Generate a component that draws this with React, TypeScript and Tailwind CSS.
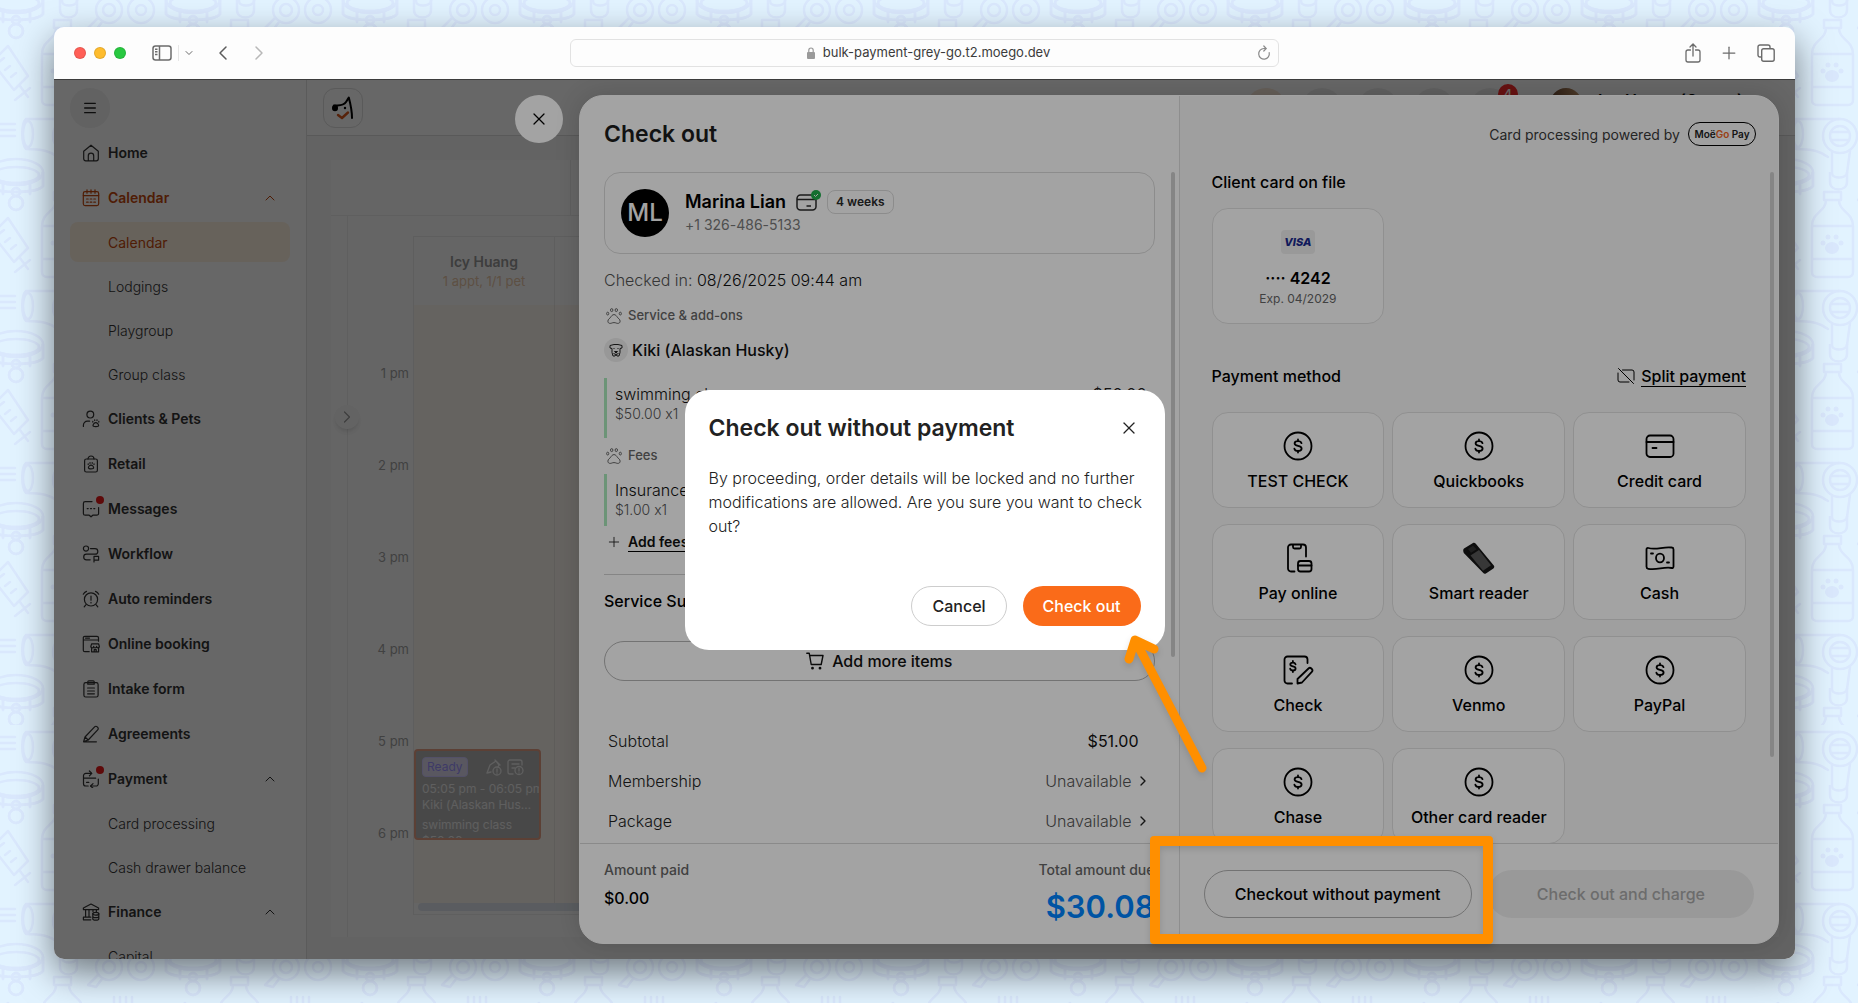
import type { ReactNode } from 'react'
import { ChevronDown, ChevronLeft, ChevronRight, ChevronUp, Menu, Plus, X } from 'lucide-react'

type IconName =
  | 'home'
  | 'calendar'
  | 'clients'
  | 'retail'
  | 'messages'
  | 'workflow'
  | 'reminders'
  | 'booking'
  | 'intake'
  | 'agreements'
  | 'payment'
  | 'finance'

const navIcons: Record<IconName, ReactNode> = {
  home: <path d="M1.7 7.2 9 1.2l7.3 6v7.6a2 2 0 0 1-2 2H3.7a2 2 0 0 1-2-2zM6.3 16.8v-5a2.7 2.7 0 0 1 5.4 0v5" />,
  calendar: (
    <>
      <rect x="1.3" y="2.6" width="15.4" height="14" rx="1.8" />
      <path d="M1.3 6.6h15.4M5 .8v3.4M9 .8v3.4M13 .8v3.4" />
      <path d="M4.6 10h1.6M8.2 10h1.6M11.8 10h1.6M4.6 13.2h1.6M8.2 13.2h1.6M11.8 13.2h1.6" />
    </>
  ),
  clients: (
    <>
      <circle cx="8.3" cy="4.6" r="3.4" />
      <path d="M1.4 16.4v-1.2a4 4 0 0 1 4-4h2.2M13.8 12.6c1.4 0 2.8 1.6 2.8 2.9 0 1.5-5.6 1.5-5.6 0 0-1.3 1.4-2.9 2.8-2.9zM12.7 9.8v.7M15 9.8v.7M10.8 11.4v.7M16.8 11.4v.7" />
    </>
  ),
  retail: (
    <>
      <rect x="2.6" y="4" width="12.8" height="13" rx="1.8" />
      <path d="M6 4a3 3 0 0 1 6 0M9 10.2c1.4 0 2.6 1.5 2.6 2.6 0 1.5-5.2 1.5-5.2 0 0-1.1 1.2-2.6 2.6-2.6zM8 7.6v.7M10.2 7.6v.7M6.2 8.8v.7M12 8.8v.7" />
    </>
  ),
  messages: (
    <path d="M10 1.6H3.2a1.8 1.8 0 0 0-1.8 1.8v10a1.8 1.8 0 0 0 1.8 1.8h4L9 16.8l1.8-1.6h4a1.8 1.8 0 0 0 1.8-1.8V7.5M5.2 8.6h1M8.5 8.6h1M11.8 8.6h1" />
  ),
  workflow: (
    <>
      <circle cx="4" cy="3.6" r="2.6" />
      <path d="M8.5 3.6H13a2.6 2.6 0 0 1 0 5.6H4.5a2.8 2.8 0 0 0 0 5.6h3.7M12 17v-5.6h4.6v3.8H12" />
    </>
  ),
  reminders: (
    <>
      <circle cx="9" cy="9.4" r="6.6" />
      <path d="M1.3 4.2a6 6 0 0 1 3.2-2.8M16.7 4.2a6 6 0 0 0-3.2-2.8M3.8 14.8l-1.6 2M14.2 14.8l1.6 2M9 6v4.2M9 12.4v.5" />
    </>
  ),
  booking: (
    <>
      <path d="M16.5 6.2V2.8A1.5 1.5 0 0 0 15 1.3H2.8a1.5 1.5 0 0 0-1.5 1.5v12.4a1.5 1.5 0 0 0 1.5 1.5h4.4M1.3 5h15.2M3.5 3.1h4" />
      <path d="M9.6 12.3v4.5h7v-4.5M8.8 11.4l.9-2.6h6.800l.9 2.600a1.400 1.400 0 0 1-2.800 0 1.400 1.400 0 0 1-2.900 0 1.400 1.400 0 0 1-2.900 0zM12.200 16.800v-2.200h2v2.200" />
    </>
  ),
  intake: (
    <>
      <rect x="1.9" y="2.6" width="14.2" height="14.4" rx="1.8" />
      <path d="M5.8 4.2V1.8a1 1 0 0 1 1-1h4.4a1 1 0 0 1 1 1v2.4zM5.6 8h6.8M5.6 11h6.8M5.6 13.8h6.8" />
    </>
  ),
  agreements: (
    <path d="M3 12 12.6 1.8a1.8 1.8 0 0 1 2.6 0l.5.5a1.8 1.8 0 0 1 0 2.6L6.2 15l-4.6 1.6zM3 12l3.2 3M1.6 16.8h12.8" />
  ),
  payment: (
    <>
      <path d="M9.5 3.4H3.8a2.3 2.3 0 0 0-2.3 2.3v8a2.3 2.3 0 0 0 2.3 2.3h2.4M8.6 16H14a2.3 2.3 0 0 0 2.3-2.3V9M1.5 8.2h12.2M4.6 12.4h2.2" />
      <path d="m7.4 1 2.4 2.4-2.4 2.4M11 13.6 8.6 16l2.4 2.2" />
    </>
  ),
  finance: (
    <>
      <path d="M1.4 6.6V5L9 1l7.6 4v1.6zM3.6 6.6v7M7 6.6v7M11 6.6v2M14.4 6.6v2M1.4 16.6v-2.4h7.4M1.4 16.8h7.4" />
      <ellipse cx="13.8" cy="10.7" rx="3" ry="1.4" />
      <path d="M10.8 10.7v5c0 2 6 2 6 0v-5M10.8 13.2c0 2 6 2 6 0" />
    </>
  ),
}

type NavItem = { label: string; icon?: IconName; open?: boolean; dot?: boolean; active?: boolean }

const navItems: NavItem[] = [
  { label: 'Home', icon: 'home' },
  { label: 'Calendar', icon: 'calendar', open: true, active: true },
  { label: 'Calendar', active: true },
  { label: 'Lodgings' },
  { label: 'Playgroup' },
  { label: 'Group class' },
  { label: 'Clients & Pets', icon: 'clients' },
  { label: 'Retail', icon: 'retail' },
  { label: 'Messages', icon: 'messages', dot: true },
  { label: 'Workflow', icon: 'workflow' },
  { label: 'Auto reminders', icon: 'reminders' },
  { label: 'Online booking', icon: 'booking' },
  { label: 'Intake form', icon: 'intake' },
  { label: 'Agreements', icon: 'agreements' },
  { label: 'Payment', icon: 'payment', open: true, dot: true },
  { label: 'Card processing' },
  { label: 'Cash drawer balance' },
  { label: 'Finance', icon: 'finance', open: true },
  { label: 'Capital' },
]

const hours = ['1 pm', '2 pm', '3 pm', '4 pm', '5 pm', '6 pm']

function Backdrop() {
  return (
    <svg className="absolute inset-0 h-full w-full" aria-hidden="true">
      <defs>
        <g id="collar">
          <ellipse cx="16" cy="0" rx="27" ry="13" />
          <ellipse cx="16" cy="3" rx="23" ry="8" />
          <path d="M-11 0v14c6 8 48 8 54 0V0M3 10v12M30 10v12" />
          <circle cx="16" cy="20" r="4" />
          <circle cx="16" cy="31" r="7" />
        </g>
        <g id="doodles" fill="none" stroke="#dae8fd" strokeWidth="2.5" strokeLinecap="round" strokeLinejoin="round">
          <use href="#collar" />
          <use href="#collar" x="177" />
          <use href="#collar" y="172" />
          <use href="#collar" x="177" y="172" />
          <path d="M-8 62 8 46l20 30-14 14zM4 58l-5 4M10 66l-5 4M16 73l-5 4M20 86l8 11M15 100l15-12M0 124h15M0 130h15M0 136h15" />
          <path d="M60 0v10c0 10 17 10 17 0V0" />
          <path d="M54 20h17v8H54zM56 28c0 12-14 12-14 26v46c0 3 2 5 5 5h31c3 0 5-2 5-5V54c0-14-14-14-14-26M42 54h41M42 87h41" />
          <path d="M70 119H26c-5 5-5 24 0 30 16 0 24 2 32 8M62 152v21c0 6 14 6 15 0l3-22" />
          <ellipse cx="28" cy="134" rx="5" ry="13" />
          <circle cx="70" cy="136" r="17" />
          <circle cx="70" cy="136" r="10" />
          <path d="M61 132h18M61 140h18" />
          <circle cx="109" cy="10" r="13" />
          <circle cx="109" cy="10" r="6" />
          <path d="M98 18 88 28l8 2 6-8" />
          <circle cx="141" cy="10" r="13" />
          <circle cx="141" cy="10" r="5" />
          <path d="M114 60V40M120 60V40M126 60V40M132 60V40M110 60h26v10h-26z" />
        </g>
        <g id="paw" fill="#dae8fd">
          <ellipse cx="62" cy="76" rx="7" ry="6" />
          <circle cx="53" cy="71" r="2.5" />
          <circle cx="58" cy="65" r="2.5" />
          <circle cx="66" cy="65" r="2.5" />
          <circle cx="71" cy="71" r="2.5" />
        </g>
        <pattern id="upper" width="177" height="172" patternUnits="userSpaceOnUse">
          <use href="#doodles" />
          <use href="#doodles" y="-172" />
          <use href="#paw" />
        </pattern>
        <pattern id="lower" width="177" height="172" patternUnits="userSpaceOnUse" patternTransform="translate(0 97)">
          <use href="#doodles" />
          <use href="#doodles" y="-172" />
          <use href="#paw" />
        </pattern>
      </defs>
      <rect width="100%" height="725" fill="url(#upper)" />
      <rect y="725" width="100%" height="100%" fill="url(#lower)" />
    </svg>
  )
}

function TitleBar() {
  return (
    <div className="flex h-[53px] shrink-0 items-center border-b border-[#3c3c3c] bg-[#fdfdfd] px-5">
      <div className="flex flex-1 items-center">
        <div className="flex gap-2">
          <span className="size-3 rounded-full border border-black/10 bg-[#ff5f57]" />
          <span className="size-3 rounded-full border border-black/10 bg-[#febc2e]" />
          <span className="size-3 rounded-full border border-black/10 bg-[#28c840]" />
        </div>
        <svg className="ml-[26px] h-4 w-5" viewBox="0 0 20 16" fill="none" stroke="#6b6b6b" strokeWidth="1.5">
          <rect x="1" y="1" width="18" height="14" rx="2.5" />
          <path d="M7.5 1v14M3 4.2h2.5M3 6.800h2.500M3 9.400h2.500" />
        </svg>
        <span className="ml-1.5 h-4 w-px bg-[#e6e6e6]" />
        <ChevronDown className="ml-1 size-3 text-[#6b6b6b]" />
        <button type="button" aria-label="Back" className="ml-4 text-[#5c5c5c]">
          <ChevronLeft className="size-6" strokeWidth={1.5} />
        </button>
        <button type="button" aria-label="Forward" className="ml-3 text-[#b8b8b8]">
          <ChevronRight className="size-6" strokeWidth={1.5} />
        </button>
      </div>
      <div className="flex h-7 w-5/12 items-center justify-center rounded-md border border-[#e2e2e2] px-1.5 text-[13px] text-[#3b3b3b]">
        <span className="flex flex-1 items-center justify-center gap-2 pl-6">
          <svg className="h-3 w-2" viewBox="0 0 8 12" fill="#9a9a9a">
            <rect y="5" width="8" height="7" rx="1" />
            <path d="M1.8 5V3.2a2.2 2.2 0 0 1 4.4 0V5" fill="none" stroke="#9a9a9a" strokeWidth="1.2" />
          </svg>
          bulk-payment-grey-go.t2.moego.dev
        </span>
        <svg className="size-4" viewBox="0 0 16 16" fill="none" stroke="#8a8a8a" strokeWidth="1.2" strokeLinecap="round">
          <path d="M8 3.500a5.300 5.300 0 1 0 5.200 4.200M8 3.500h2M7.800 1l2.400 2.500L7.800 6" />
        </svg>
      </div>
      <div className="flex flex-1 items-center justify-end gap-[18px] text-[#6b6b6b]">
        <svg className="h-5 w-4" viewBox="0 0 16 20" fill="none" stroke="currentColor" strokeWidth="1.3" strokeLinecap="round">
          <path d="M5.500 7H3a2 2 0 0 0-2 2v8a2 2 0 0 0 2 2h10a2 2 0 0 0 2-2V9a2 2 0 0 0-2-2h-2.500M8 13V1M5 4l3-3 3 3" />
        </svg>
        <Plus className="size-5" strokeWidth={1.5} />
        <svg className="size-[18px]" viewBox="0 0 18 18" fill="none" stroke="currentColor" strokeWidth="1.4">
          <rect x="4.7" y="4.7" width="12.5" height="12.5" rx="2" />
          <path d="M4.700 13H3a2 2 0 0 1-2-2V3a2 2 0 0 1 2-2h8a2 2 0 0 1 2 2v1.700" />
        </svg>
      </div>
    </div>
  )
}

function Sidebar() {
  return (
    <nav className="w-[253px] shrink-0 border-r border-[#e2e2e2] px-4 pt-2 text-[14px] text-[#333]">
      <button type="button" aria-label="Collapse menu" className="flex size-10 items-center justify-center rounded-full bg-[#f3f3f3]">
        <Menu className="size-4 text-[#222]" />
      </button>
      <ul className="pt-0.5">
        {navItems.map((item, i) =>
          item.icon ? (
            <li key={i} className="flex h-[45px] items-center">
              <a href="#" className={item.active ? 'flex flex-1 items-center pl-3 font-semibold text-[#c5490d]' : 'flex flex-1 items-center pl-3 font-semibold'}>
                <span className="relative">
                  <svg className="size-[18px]" viewBox="0 0 18 18" fill="none" stroke="currentColor" strokeWidth="1.2" strokeLinecap="round" strokeLinejoin="round">
                    {navIcons[item.icon]}
                  </svg>
                  {item.dot && <span className="absolute -top-1 -right-1 size-2 rounded-full bg-[#ea1c1c]" />}
                </span>
                <span className="flex-1 pl-2">{item.label}</span>
                {item.open && <ChevronUp className="mr-3 size-4" strokeWidth={1.5} />}
              </a>
            </li>
          ) : (
            <li key={i} className="h-11 py-0.5">
              <a
                href="#"
                className={
                  item.active
                    ? 'flex h-10 items-center rounded-lg bg-[#fff3e2] pl-[38px] text-[#c5490d]'
                    : 'flex h-10 items-center pl-[38px] font-light'
                }
              >
                {item.label}
              </a>
            </li>
          )
        )}
      </ul>
    </nav>
  )
}

function Appointment() {
  return (
    <div className="h-[91px] w-[127px] overflow-hidden rounded-sm border-2 border-[#e69f86] bg-[#b4b4b4] px-1.5 pt-1.5 text-[12px] whitespace-nowrap text-[#ececec]">
      <div className="flex items-center justify-between pr-2">
        <span className="rounded-sm border border-[#cfc8ff] bg-[#dcdaf0] px-1 text-xs leading-[18px] text-[#9c92ff]">Ready</span>
        <svg className="h-[18px] w-10" viewBox="0 0 40 18" fill="none" stroke="currentColor" strokeWidth="1.3" strokeLinecap="round" strokeLinejoin="round">
          <path d="M2 15 5 7l6-4 3 4-1 2M2 15l4-1M10 2l5 5" />
          <circle cx="12" cy="13" r="4" />
          <path d="M12 11v2.500M12 15v.2M28 16h-3a2 2 0 0 1-2-2V4a2 2 0 0 1 2-2h10a2 2 0 0 1 2 2v3M27 6h7M27 10h3" />
          <circle cx="34" cy="12.5" r="4" />
          <path d="M34 10.500V13M34 14.800v.2" />
        </svg>
      </div>
      <p className="pt-1 leading-4">05:05 pm - 06:05 pm</p>
      <p className="w-28 truncate leading-4">Kiki (Alaskan Husky)</p>
      <p className="pt-1 leading-4">swimming class</p>
      <p className="leading-4">$50.00</p>
    </div>
  )
}

function CalendarPage() {
  return (
    <div className="flex min-w-0 flex-1 flex-col bg-[#f6f6f6]">
      <header className="flex h-14 shrink-0 items-start border-b border-[#dcdcdc] bg-white px-4 pt-2">
        <div className="flex size-10 items-center justify-center rounded-xl border border-[#e0e0e0]">
          <svg className="size-6" viewBox="0 0 24 24" fill="none" strokeLinecap="round" strokeLinejoin="round">
            <path d="M3 9.500c5-.5 9 1 12-3.500 1.200-1.800 2-3.200 2.800-4.500C19.500 8 21 14 21 22" stroke="#000" strokeWidth="2" />
            <ellipse cx="4" cy="12" rx="3" ry="3.300" fill="#000" />
            <circle cx="14" cy="12" r="1.2" fill="#000" />
            <path d="m7 19 4 3 6-5.500" stroke="#d8561a" strokeWidth="2.4" />
          </svg>
        </div>
        <div className="flex flex-1 items-start justify-end gap-4 pr-9">
          <span className="size-10 rounded-full bg-[#fbeadb]" />
          <span className="size-10 rounded-full bg-[#efefef]" />
          <span className="size-10 rounded-full bg-[#efefef]" />
          <span className="size-10 rounded-full bg-[#efefef]" />
          <span className="relative size-10 rounded-full bg-[#efefef]">
            <span className="absolute -top-1 -right-2 size-5 rounded-full bg-[#ff2c2c] text-center text-xs leading-5 font-semibold text-white">4</span>
          </span>
          <span className="ml-6 size-8 rounded-full bg-[#9c6b45] bg-linear-to-r from-[#6d4a33] to-[#c99a6c]" />
          <span className="text-base leading-6 font-semibold text-black">Icy Huang (Owner)</span>
        </div>
      </header>
      <div className="flex min-h-0 flex-1 flex-col pt-6 pr-4 pb-[22px] pl-6">
        <div className="flex min-h-0 flex-1 flex-col bg-[#fcfcfc]">
          <div className="h-14 shrink-0 border-b border-[#ececec]">
            <div className="h-full w-[240px] border-r border-[#ececec]" />
          </div>
          <div className="flex min-h-0 flex-1">
            <div className="relative w-[17px] shrink-0 border-r border-[#ececec]">
              <button type="button" aria-label="Expand" className="absolute top-[189px] -right-3 flex size-6 items-center justify-center rounded-full bg-[#f7f7f7] text-[#9a9a9a] shadow-md">
                <ChevronRight className="size-5" strokeWidth={1.5} />
              </button>
            </div>
            <div className="w-[65px] shrink-0 pt-[141px] pr-1 text-right text-[13px] text-[#a2a2a2]">
              {hours.map((h) => (
                <div key={h} className="h-[92px] leading-8">
                  {h}
                </div>
              ))}
            </div>
            <div className="mt-5 mb-[22px] flex flex-1 flex-col border-t border-l border-[#ebebeb]">
              <div className="flex h-[68px] w-[141px] flex-col items-center justify-center border-r border-[#ebebeb]">
                <span className="text-[14px] leading-5 font-semibold text-[#989898]">Icy Huang</span>
                <span className="text-[13px] leading-[18px] text-[#e8c6a6]">1 appt, 1/1 pet</span>
              </div>
              <div className="min-h-0 flex-1 bg-[#fcf6ef]">
                <div className="h-full w-[141px] border-r border-[#ebe6e0] pt-[444px]">
                  <Appointment />
                </div>
              </div>
              <div className="h-3 border-b border-[#ececec]">
                <div className="ml-1 h-2 rounded-l-full bg-[#e0e6ee]" />
              </div>
            </div>
          </div>
        </div>
      </div>
    </div>
  )
}

function PawIcon() {
  return (
    <svg className="size-4" viewBox="0 0 16 16" fill="none" stroke="currentColor" strokeWidth="1" strokeLinejoin="round">
      <path d="M8 6.600c1.600 0 2.500 1.300 3.300 2.600.7 1.200 2.800 1.800 2.800 4 0 1.500-1 2.200-2.300 2.200-1.400 0-2-.8-3.800-.8s-2.400.8-3.800.8c-1.300 0-2.300-.7-2.300-2.200 0-2.200 2.100-2.800 2.800-4C5.500 7.900 6.400 6.600 8 6.600z" />
      <ellipse cx="5.7" cy="2.1" rx="1.2" ry="1.5" />
      <ellipse cx="10.3" cy="2.1" rx="1.2" ry="1.5" />
      <ellipse cx="1.7" cy="5.6" rx="1.1" ry="1.4" />
      <ellipse cx="14.3" cy="5.6" rx="1.1" ry="1.4" />
    </svg>
  )
}

function LineItem({ name, detail, price }: { name: string; detail: string; price: string }) {
  return (
    <div className="flex flex-1 items-start justify-between border-l-[3px] border-[#a9e8bb] pt-1.5 pr-2 pl-2">
      <div>
        <p className="text-base leading-5 font-light text-[#111]">{name}</p>
        <p className="text-[14px] leading-5 font-light text-[#555]">{detail}</p>
      </div>
      <span className="text-base leading-5 text-[#222]">{price}</span>
    </div>
  )
}

function SummaryRow({ label, value, link }: { label: string; value: string; link?: boolean }) {
  return (
    <div className="flex h-10 items-center px-1 text-base font-light">
      <span className="flex-1 text-[#222]">{label}</span>
      {link ? (
        <button type="button" className="flex items-center gap-[3px] text-[#555]">
          {value}
          <ChevronRight className="size-4 text-[#222]" strokeWidth={2} />
        </button>
      ) : (
        <span className="pr-3 font-normal text-[#111]">{value}</span>
      )}
    </div>
  )
}

function OrderPane() {
  return (
    <section className="flex min-w-0 flex-1 flex-col border-r border-[#dedede]">
      <h1 className="px-6 py-[22px] text-[23px] leading-8 font-semibold text-[#1d1d1d]">Check out</h1>
      <div className="flex min-h-0 flex-1 overflow-hidden pr-1 pl-6">
        <div className="flex-1">
          <div className="flex h-[82px] items-center gap-4 rounded-2xl border border-[#dcdcdc] px-4">
            <span className="flex size-12 items-center justify-center rounded-full bg-black text-[24px] font-medium text-white">ML</span>
            <div>
              <div className="flex items-center gap-2.5">
                <span className="text-[18px] leading-6 font-semibold text-black">Marina Lian</span>
                <span className="relative">
                  <svg className="h-[17px] w-[21px]" viewBox="0 0 21 17" fill="none" stroke="#2a2a2a" strokeWidth="1.5">
                    <rect x="1" y="1" width="19" height="15" rx="3.5" />
                    <path d="M1 5.500h19M10.500 12h4.500" />
                  </svg>
                  <svg className="absolute -top-1 -right-1 size-2.5" viewBox="0 0 10 10">
                    <circle cx="5" cy="5" r="5" fill="#1fae4b" />
                    <path d="m3 5 1.500 1.500L7 4" fill="none" stroke="#fff" />
                  </svg>
                </span>
                <span className="rounded-lg border border-[#dcdcdc] px-2 text-[12px] leading-[22px] font-semibold text-[#2a2a2a]">4 weeks</span>
              </div>
              <p className="text-[14px] leading-[22px] text-[#7b7b7b]">+1 326-486-5133</p>
            </div>
          </div>
          <p className="pt-3.5 text-base leading-6 font-light text-[#111]">
            <span className="text-[#555]">Checked in:</span> 08/26/2025 09:44 am
          </p>
          <div className="mt-3.5 flex h-5 items-center gap-1.5 pl-0.5 text-[13px] font-medium text-[#666]">
            <PawIcon />
            Service &amp; add-ons
          </div>
          <div className="mt-3 flex items-center gap-1">
            <span className="flex size-6 items-center justify-center rounded-full bg-[#eee]">
              <svg className="size-3.5" viewBox="0 0 14 14" fill="none" stroke="#222" strokeWidth="1" strokeLinejoin="round">
                <path d="M3 2 1 2.500v2.500l2 .5v4L4 13h2l1-1.500L8 13h2l1-3.500v-4l2-.5V2.500L11 2 9 1.500H5zM5.500 8.500h3L7 10zM5 5v1M9 5v1M4.500 10.500 7 11.500l2.500-1" />
              </svg>
            </span>
            <span className="text-base leading-6 font-medium text-[#111]">Kiki (Alaskan Husky)</span>
          </div>
          <div className="mt-4 flex h-[60px]">
            <LineItem name="swimming class" detail="$50.00 x1" price="$50.00" />
          </div>
          <div className="mt-2 flex h-5 items-center gap-1.5 pl-0.5 text-[13px] font-medium text-[#666]">
            <PawIcon />
            Fees
          </div>
          <div className="mt-2 flex h-[52px]">
            <LineItem name="Insurance" detail="$1.00 x1" price="$1.00" />
          </div>
          <button type="button" className="mt-1 flex h-6 items-center gap-1.5 pl-0.5 text-[14px] font-semibold text-[#111]">
            <Plus className="size-4" strokeWidth={1.25} />
            <span className="border-b border-black leading-[18px]">Add fees</span>
          </button>
          <div className="mt-5 border-t border-[#d0d0d0]" />
          <div className="flex justify-between pt-3.5 pb-7 text-base leading-6 font-medium text-black">
            <span>Service Subtotal</span>
            <span>$51.00</span>
          </div>
          <button type="button" className="flex h-10 w-full items-center justify-center gap-2 rounded-full border border-[#b4b4b4] text-base font-medium text-[#111]">
            <svg className="size-[18px]" viewBox="0 0 18 18" fill="none" stroke="currentColor" strokeWidth="1.4" strokeLinecap="round" strokeLinejoin="round">
              <path d="M.8 1.200h2.400l2 11.300h10l1.800-9H3.600" />
              <circle cx="6.5" cy="16.2" r=".7" fill="currentColor" />
              <circle cx="14" cy="16.2" r=".7" fill="currentColor" />
            </svg>
            Add more items
          </button>
          <div className="pt-10">
            <SummaryRow label="Subtotal" value="$51.00" />
            <SummaryRow label="Membership" value="Unavailable" link />
            <SummaryRow label="Package" value="Unavailable" link />
          </div>
        </div>
        <div className="ml-4 h-[485px] w-1 shrink-0 rounded-full bg-[#d0d0d0]" />
      </div>
      <footer className="flex h-[100px] shrink-0 justify-between border-t border-[#d8d8d8] px-6 pt-4">
        <div>
          <p className="text-[14px] leading-5 font-medium text-[#666]">Amount paid</p>
          <p className="pt-1 text-base leading-7 font-medium text-black">$0.00</p>
        </div>
        <div className="text-right">
          <p className="text-[14px] leading-5 font-medium text-[#666]">Total amount due</p>
          <p className="pt-1 text-[31px] leading-[46px] font-semibold text-[#0084ff]">$30.08</p>
        </div>
      </footer>
    </section>
  )
}

function DollarIcon() {
  return (
    <svg className="size-8" viewBox="0 0 32 32" fill="none" stroke="currentColor" strokeWidth="1.8" strokeLinecap="round">
      <circle cx="16" cy="16" r="13.5" />
      <path d="M19.500 13.200c-.4-1.200-1.700-2-3.500-2-2 0-3.400.9-3.400 2.300 0 3.300 7 1.400 7 4.900 0 1.500-1.500 2.500-3.600 2.500-1.900 0-3.300-.9-3.600-2.200M16 9.500v1.700M16 20.900v1.700" />
    </svg>
  )
}

const strokeProps = {
  className: 'size-8',
  viewBox: '0 0 32 32',
  fill: 'none',
  stroke: 'currentColor',
  strokeWidth: 1.8,
  strokeLinecap: 'round',
  strokeLinejoin: 'round',
} as const

const methods: { label: string; icon: ReactNode }[] = [
  { label: 'TEST CHECK', icon: <DollarIcon /> },
  { label: 'Quickbooks', icon: <DollarIcon /> },
  {
    label: 'Credit card',
    icon: (
      <svg {...strokeProps}>
        <rect x="2.5" y="5.5" width="27" height="21.5" rx="3.5" />
        <path d="M2.500 12h27M8.500 18h4" />
      </svg>
    ),
  },
  {
    label: 'Pay online',
    icon: (
      <svg {...strokeProps}>
        <path d="M12.500 29.500H9a3 3 0 0 1-3-3v-21a3 3 0 0 1 3-3h12a3 3 0 0 1 3 3v9M11 2.500v2.500a1.500 1.500 0 0 0 1.500 1.500h5A1.500 1.500 0 0 0 19 5V2.500" />
        <rect x="16" y="19" width="13.5" height="10.5" rx="2.5" />
        <path d="M16 23.500h13.500" />
      </svg>
    ),
  },
  {
    label: 'Smart reader',
    icon: (
      <svg className="size-8" viewBox="0 0 32 32">
        <path d="M1 6.500 10 1c1-.5 2-.2 2.800.7l18 21.800c.8 1 .6 2.200-.4 3l-7.500 4.900c-1 .6-2 .3-2.800-.6L.8 11C0 9 0 7.200 1 6.500z" fill="#151515" />
        <path d="m7.500 13.500 8.500-5.600 12 15.400-8 5.400z" fill="#565656" />
        <path d="m5 7 5-3.200 3.500 3.500-5.500 3.500z" fill="#303030" />
      </svg>
    ),
  },
  {
    label: 'Cash',
    icon: (
      <svg {...strokeProps}>
        <path d="M2.500 7.500c0-1 .8-1.800 1.800-1.500 8 2.500 15-1.800 23.500-.5 1 .1 1.700.9 1.700 1.900v17.100c0 1-.8 1.700-1.800 1.500-8-1.500-15 2.500-23.500.8-1-.2-1.700-1-1.700-2z" />
        <ellipse cx="16" cy="16" rx="4" ry="4.3" />
        <path d="M7 11.500h2M23 20.500h2" />
      </svg>
    ),
  },
  {
    label: 'Check',
    icon: (
      <svg {...strokeProps}>
        <path d="M10 29.500H5.500a3 3 0 0 1-3-3v-21a3 3 0 0 1 3-3h17a3 3 0 0 1 3 3v3.500" />
        <path d="M13.500 10.300c-.3-1-1.300-1.600-2.600-1.600-1.500 0-2.600.7-2.600 1.800 0 2.600 5.300 1.200 5.300 3.900 0 1.200-1.200 2-2.700 2-1.400 0-2.500-.7-2.700-1.700M10.900 7v1.700M10.900 16.400V18M15.500 29.500v-4.500l11-10.500a2 2 0 0 1 2.800 0l.5.500a2 2 0 0 1 0 2.800L20 28.500z" />
      </svg>
    ),
  },
  { label: 'Venmo', icon: <DollarIcon /> },
  { label: 'PayPal', icon: <DollarIcon /> },
  { label: 'Chase', icon: <DollarIcon /> },
  { label: 'Other card reader', icon: <DollarIcon /> },
]

function PaymentPane() {
  return (
    <section className="flex min-w-0 flex-1 flex-col bg-[#f9f9f9] text-black">
      <div className="flex h-[76px] shrink-0 items-center justify-end gap-2 pr-[22px] text-[14px] text-[#3a3a3a]">
        Card processing powered by
        <span className="flex h-6 w-[68px] items-center justify-center rounded-full border border-black bg-white/40 text-[10px] font-semibold text-[#222]">
          Moë<span className="text-[#f0641e]">Go</span>&nbsp;Pay
        </span>
      </div>
      <div className="flex min-h-0 flex-1 overflow-hidden pr-1 pl-8">
        <div className="flex-1">
          <h2 className="text-base leading-5 font-medium">Client card on file</h2>
          <div className="mt-4 grid grid-cols-3 gap-2">
            <button type="button" className="flex h-[116px] flex-col items-center rounded-2xl border border-[#e2e2e2] bg-white pt-[21px]">
              <span className="flex h-6 w-[34px] items-center justify-center rounded-sm bg-[#f0f0f0] text-[11px] font-extrabold text-[#1a2a8f] italic">VISA</span>
              <span className="pt-3 text-base leading-6 font-semibold">···· 4242</span>
              <span className="text-[12px] leading-[18px] text-[#666]">Exp. 04/2029</span>
            </button>
          </div>
          <div className="flex items-center justify-between pt-10 text-base leading-6 font-medium">
            <h2>Payment method</h2>
            <button type="button" className="flex items-center gap-1.5">
              <svg className="size-[18px]" viewBox="0 0 18 18" fill="none" stroke="currentColor" strokeWidth="1" strokeLinecap="round">
                <path d="M1.500 1.500l15 15M5.500 3H15a2 2 0 0 1 2 2v8M1 6v7a2 2 0 0 0 2 2h9" />
              </svg>
              <span className="border-b border-black leading-5">Split payment</span>
            </button>
          </div>
          <div className="mt-6 grid grid-cols-3 gap-x-2 gap-y-4">
            {methods.map((m) => (
              <button key={m.label} type="button" className="flex h-24 flex-col items-center rounded-2xl border border-[#e2e2e2] bg-white pt-[17px] text-base leading-6 font-medium">
                {m.icon}
                <span className="pt-[7px]">{m.label}</span>
              </button>
            ))}
          </div>
        </div>
        <div className="ml-6 h-[585px] w-1 shrink-0 rounded-full bg-[#d0d0d0]" />
      </div>
      <footer className="flex h-[100px] shrink-0 items-center gap-4 border-t border-[#d8d8d8] bg-white px-6 text-base font-medium">
        <button type="button" className="h-12 flex-1 rounded-full border border-[#b4b4b4]">
          Checkout without payment
        </button>
        <button type="button" disabled className="h-12 flex-1 rounded-full bg-[#f0f0f0] text-[#aaa]">
          Check out and charge
        </button>
      </footer>
    </section>
  )
}

function ConfirmDialog() {
  return (
    <div role="dialog" aria-labelledby="confirm-title" className="flex h-[260px] w-[480px] flex-col rounded-3xl bg-white p-6 text-[#222]">
      <div className="flex items-center justify-between">
        <h2 id="confirm-title" className="text-[23px] leading-7 font-semibold">
          Check out without payment
        </h2>
        <button type="button" aria-label="Close" className="mr-0.5">
          <X className="size-5" strokeWidth={1.5} />
        </button>
      </div>
      <p className="-mr-3 pt-6 text-base leading-6 font-light text-[#222]">
        By proceeding, order details will be locked and no further modifications are allowed. Are you sure you want to check out?
      </p>
      <div className="mt-auto flex justify-end gap-4 text-base font-medium">
        <button type="button" className="h-10 rounded-full border border-[#cdcdcd] px-5">
          Cancel
        </button>
        <button type="button" className="h-10 rounded-full bg-[#fa6b19] px-5 text-white">
          Check out
        </button>
      </div>
    </div>
  )
}

export default function App() {
  return (
    <div className="relative flex h-screen overflow-hidden bg-[#e2f3ff] pt-[27px] pr-[63px] pb-11 pl-[54px] font-['Inter','Liberation_Sans',sans-serif] [font-feature-settings:'calt'_0]">
      <Backdrop />
      <div className="relative flex min-w-0 flex-1">
        <div className="flex min-w-0 flex-1 flex-col overflow-hidden rounded-[10px] shadow-[0_14px_36px_rgba(0,0,0,0.5)]">
          <TitleBar />
          <div className="relative flex min-h-0 flex-1 overflow-hidden bg-white">
            <Sidebar />
            <CalendarPage />
            <div className="absolute inset-0 bg-black/37" />
            <div className="absolute inset-0 flex items-start gap-4 py-[15px] pr-4 pl-[461px]">
              <button type="button" aria-label="Close checkout" className="flex size-12 shrink-0 items-center justify-center rounded-full bg-white text-black">
                <X className="size-5" strokeWidth={1.5} />
              </button>
              <div className="flex h-full min-w-0 flex-1 overflow-hidden rounded-3xl border border-white bg-white shadow-[0_0_24px_rgba(0,0,0,0.15)]">
                <OrderPane />
                <PaymentPane />
              </div>
            </div>
            <div className="absolute inset-0 flex items-center justify-center bg-black/36">
              <ConfirmDialog />
            </div>
          </div>
        </div>
        <div className="absolute right-[302px] bottom-[15px] h-[108px] w-[343px] rounded-sm border-10 border-[#ff8f00] drop-shadow-md" />
        <svg className="absolute right-[585px] bottom-[183px] h-[146px] w-[90px] drop-shadow-md" viewBox="0 0 90 146" fill="none" stroke="#ff8f00" strokeWidth="9" strokeLinecap="round" strokeLinejoin="round">
          <path d="M82 138 15 10M9 29l6-19 19 9" />
        </svg>
      </div>
    </div>
  )
}
